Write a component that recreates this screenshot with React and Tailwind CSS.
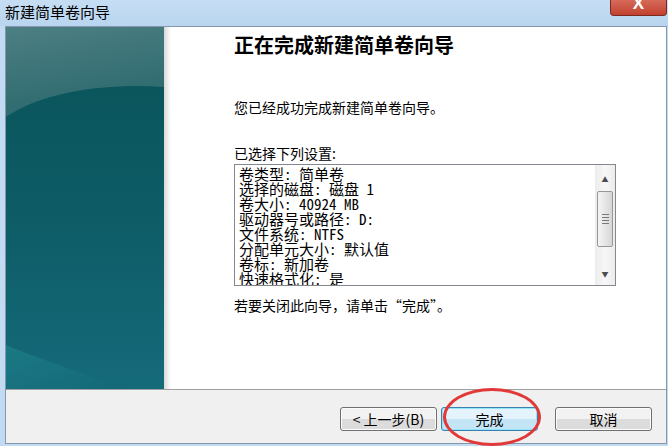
import React from 'react';

const settings = [
    '卷类型: 简单卷',
    '选择的磁盘: 磁盘 1',
    '卷大小: 40924 MB',
    '驱动器号或路径: D:',
    '文件系统: NTFS',
    '分配单元大小: 默认值',
    '卷标: 新加卷',
    '快速格式化: 是',
];

const ui = { fontFamily: '"Noto Sans CJK SC", "Noto Sans", sans-serif' };
const mono = { fontFamily: '"Noto Sans Mono CJK SC", "Liberation Mono", "Noto Sans CJK SC", monospace' };

// teal artwork on the left of the wizard
const SideArt = () => (
    <svg width="158" height="362" viewBox="0 0 158 362" className="block">
        <defs>
            <linearGradient id="base" x1="0" y1="0" x2="0" y2="1">
                <stop offset="0" stopColor="#0b545a" />
                <stop offset="0.45" stopColor="#0c5a63" />
                <stop offset="1" stopColor="#156a7a" />
            </linearGradient>
            <linearGradient id="topg" x1="0" y1="0" x2="0.3" y2="1">
                <stop offset="0" stopColor="#4d7f83" />
                <stop offset="1" stopColor="#2c696e" />
            </linearGradient>
            <linearGradient id="botg" x1="0" y1="0" x2="1" y2="1">
                <stop offset="0" stopColor="#1d7f88" />
                <stop offset="1" stopColor="#136777" />
            </linearGradient>
        </defs>
        <rect width="158" height="362" fill="url(#base)" />
        <path d="M0 0 H158 V60 C110 56 40 62 0 90 Z" fill="url(#topg)" />
        <path d="M0 318 C40 335 90 350 120 362 H0 Z" fill="url(#botg)" opacity="0.8" />
    </svg>
);

const Btn = ({ children, primary }) => (
    <button
        className={`h-[24px] w-[97px] rounded-[3px] border text-[14px] leading-none text-black ${primary
            ? 'border-[#3c7fb1] bg-gradient-to-b from-[#e5f4fc] from-50% to-[#c4e5f6] to-50% shadow-[inset_0_0_0_1px_#8fe6fb]'
            : 'border-[#707070] bg-gradient-to-b from-[#f2f2f2] from-50% to-[#dcdcdc] to-50% shadow-[inset_0_0_0_1px_#fcfcfc]'
            }`}
        style={ui}
    >
        {children}
    </button>
);

export default function App() {
    return (
        <div className="relative flex h-[446px] w-[668px] flex-col overflow-hidden bg-[#c0dbf2]" style={ui}>
            {/* title bar */}
            <div className="flex h-[26px] shrink-0 items-start justify-between bg-gradient-to-b from-[#c6def4] to-[#b9d5ef]">
                <span className="pl-[5px] pt-[2px] text-[15px] leading-[20px] text-black">新建简单卷向导</span>
                <div className="mr-[1px] flex h-[16px] w-[57px] items-end justify-center overflow-hidden rounded-b-[4px] border border-t-0 border-[#7b2a22] bg-gradient-to-b from-[#d66a5a] to-[#c2402e]">
                    <span className="mb-[3px] text-[17px] font-bold leading-[17px] text-white" style={{ fontFamily: '"Liberation Sans", sans-serif' }}>X</span>
                </div>
            </div>

            {/* window body */}
            <div className="ml-[5px] mr-[1px] flex flex-1 flex-col border border-[#8497ad] bg-white">
                <div className="flex h-[362px] shrink-0">
                    <div className="w-[158px] shrink-0">
                        <SideArt />
                    </div>
                    <div className="relative flex-1 pl-[70px]">
                        <div className="absolute inset-y-0 left-0 w-[7px] bg-gradient-to-r from-[#d9d9d9] to-white" />
                        <h1 className="pt-[4px] text-[20px] font-bold leading-[28px] text-black">正在完成新建简单卷向导</h1>
                        <p className="mt-[38px] text-[14px] leading-[20px] text-black">您已经成功完成新建简单卷向导。</p>
                        <p className="mt-[26px] text-[14px] leading-[20px] text-black">已选择下列设置:</p>
                        <div className="mt-[1px] flex h-[122px] w-[382px] border border-[#828790] bg-white">
                            <div className="flex-1 overflow-hidden pl-[4px] pt-[1px] text-[15px] leading-[15px] text-black" style={mono}>
                                {settings.map((s) => (
                                    <div key={s} className="whitespace-pre">{s}</div>
                                ))}
                            </div>
                            <div className="flex w-[20px] shrink-0 flex-col items-center bg-gradient-to-r from-[#ececec] via-[#f7f7f7] to-[#ececec]">
                                <div className="flex h-[26px] items-center justify-center pt-[2px] text-[7px] text-[#4d4d4d]">▲</div>
                                <div className="flex h-[56px] w-[16px] flex-col items-center justify-center gap-[2px] rounded-[2px] border border-[#979797] bg-gradient-to-r from-[#f4f4f4] via-[#e6e6e6] to-[#d6d6d6]">
                                    <div className="h-px w-[7px] bg-[#7a7a7a]" />
                                    <div className="h-px w-[7px] bg-[#7a7a7a]" />
                                    <div className="h-px w-[7px] bg-[#7a7a7a]" />
                                    <div className="h-px w-[7px] bg-[#7a7a7a]" />
                                </div>
                                <div className="flex flex-1 items-end justify-center pb-[6px] text-[7px] text-[#4d4d4d]">▼</div>
                            </div>
                        </div>
                        <p className="mt-[9px] text-[14px] leading-[20px] text-black">若要关闭此向导，请单击“完成”。</p>
                    </div>
                </div>
                <div className="flex flex-1 items-start justify-end border-t border-[#a0a0a0] bg-[#f0f0f0] pr-[14px] pt-[17px]">
                    <Btn>&lt;&nbsp;上一步(B)</Btn>
                    <div className="w-[4px]" />
                    <Btn primary>完成</Btn>
                    <div className="w-[17px]" />
                    <Btn>取消</Btn>
                </div>
            </div>
            <div className="h-[2px] shrink-0" />

            {/* red highlight circle */}
            <div className="pointer-events-none absolute left-[443px] top-[388px] h-[58px] w-[98px] rounded-[50%] border-[3px] border-[#e23838]" />
        </div>
    );
}
